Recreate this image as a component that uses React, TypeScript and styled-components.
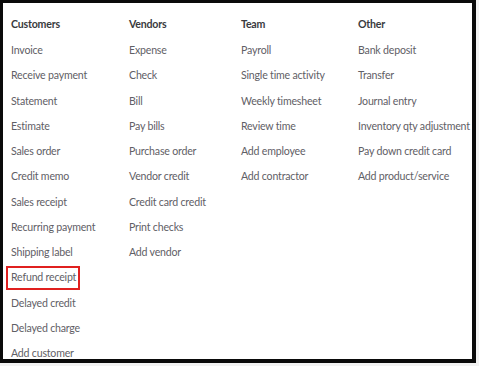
import React from 'react';
import styled, {createGlobalStyle} from "styled-components";

const GlobalStyle = createGlobalStyle`
  body {
    margin: 0;
    background: #f2f2f2;
    font-family: Lato, "Noto Sans", sans-serif;
  }
`

type Column = {
    title: string
    items: string[]
}

const columns: Column[] = [
    {
        title: "Customers",
        items: ["Invoice", "Receive payment", "Statement", "Estimate", "Sales order", "Credit memo",
            "Sales receipt", "Recurring payment", "Shipping label", "Refund receipt", "Delayed credit",
            "Delayed charge", "Add customer"],
    },
    {
        title: "Vendors",
        items: ["Expense", "Check", "Bill", "Pay bills", "Purchase order", "Vendor credit",
            "Credit card credit", "Print checks", "Add vendor"],
    },
    {
        title: "Team",
        items: ["Payroll", "Single time activity", "Weekly timesheet", "Review time", "Add employee",
            "Add contractor"],
    },
    {
        title: "Other",
        items: ["Bank deposit", "Transfer", "Journal entry", "Inventory qty adjustment",
            "Pay down credit card", "Add product/service"],
    },
]

const highlighted = "Refund receipt"

export default function App() {
    return (
        <>
            <GlobalStyle/>
            <Frame>
                <Menu>
                    {columns.map(col => (
                        <Col key={col.title}>
                            <Heading>{col.title}</Heading>
                            {col.items.map(item => (
                                <Item key={item} $marked={item === highlighted}>
                                    <span>{item}</span>
                                </Item>
                            ))}
                        </Col>
                    ))}
                </Menu>
            </Frame>
        </>
    );
}

const Frame = styled.div`
  width: 476px;
  height: 363px;
  box-sizing: border-box;
  border: 3px solid #0a0a0a;
  border-right-width: 4px;
  border-bottom-width: 4px;
  background: #fff;
  overflow: hidden;
`

const Menu = styled.div`
  display: grid;
  grid-template-columns: 118px 112px 117px 1fr;
  padding: 8px 0 0 8px;
`

const Col = styled.div`
  display: flex;
  flex-direction: column;
`

const Heading = styled.div`
  font-size: 10.6px;
  font-weight: 700;
  letter-spacing: -0.2px;
  color: #393a3d;
  line-height: 27px;
`

const Item = styled.div<{ $marked?: boolean }>`
  font-size: 10.6px;
  letter-spacing: -0.2px;
  color: #5f6066;
  line-height: 25.25px;
  white-space: nowrap;

  span {
    position: relative;
  }

  span::before {
    content: "";
    display: ${p => p.$marked ? "block" : "none"};
    position: absolute;
    left: -5px;
    right: -4px;
    top: -5px;
    bottom: -7px;
    border: 2px solid #e0201f;
  }
`
